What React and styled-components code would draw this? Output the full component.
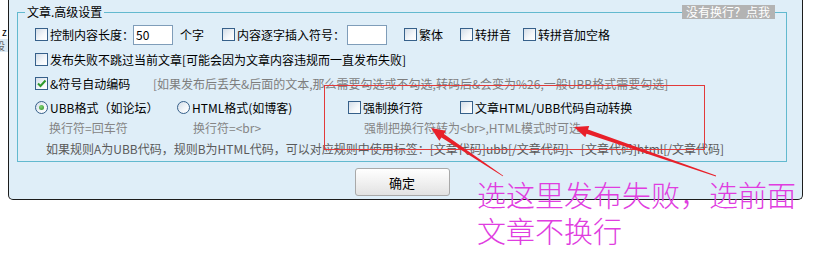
import React from "react";
import styled, { createGlobalStyle } from "styled-components";

const GlobalStyle = createGlobalStyle`
  html, body {
    margin: 0;
    padding: 0;
    background: #fff;
  }
  body {
    font-family: "Noto Sans CJK SC", "Liberation Sans", sans-serif;
    font-size: 12px;
    color: #000;
  }
`;

// arrow with a shaft that narrows toward the tail
const arrowPoints = (tail, tip, tailW = 0.8, neckW = 4.5, headL = 14, headW = 12) => {
  const [x1, y1] = tail;
  const [x2, y2] = tip;
  const len = Math.hypot(x2 - x1, y2 - y1);
  const ux = (x2 - x1) / len;
  const uy = (y2 - y1) / len;
  const nx = -uy;
  const ny = ux;
  const bx = x2 - ux * headL;
  const by = y2 - uy * headL;
  return [
    [x1 + (nx * tailW) / 2, y1 + (ny * tailW) / 2],
    [bx + (nx * neckW) / 2, by + (ny * neckW) / 2],
    [bx + (nx * headW) / 2, by + (ny * headW) / 2],
    [x2, y2],
    [bx - (nx * headW) / 2, by - (ny * headW) / 2],
    [bx - (nx * neckW) / 2, by - (ny * neckW) / 2],
    [x1 - (nx * tailW) / 2, y1 - (ny * tailW) / 2],
  ]
    .map((p) => p.map((v) => v.toFixed(1)).join(","))
    .join(" ");
};

const Page = styled.div`
  position: relative;
  width: 815px;
  height: 258px;
  display: flex;
  align-items: flex-start;
  overflow: hidden;
`;

const BackStrip = styled.div`
  flex: none;
  width: 8px;
  padding-top: 25px;
  overflow: hidden;
  display: flex;
  flex-direction: column;
  gap: 1px;
  font-size: 10px;
  line-height: 13px;
`;

const BackGlyph = styled.span`
  margin-left: ${(p) => p.$ml || 0}px;
  color: ${(p) => p.$color || "#000"};
  background: ${(p) => p.$bg || "transparent"};
  white-space: nowrap;
`;

const Window = styled.div`
  position: relative;
  flex: none;
  width: 795px;
  height: 200px;
  box-sizing: border-box;
  background: #dfeef8;
  border: 1px solid #1c1c1c;
  border-top: none;
  border-radius: 0 0 5px 5px;
  padding: 0 15px 0 8px;
  display: flex;
  flex-direction: column;
`;

const Group = styled.fieldset`
  margin: 4px 0 0;
  padding: 0;
  min-width: 0;
  border: 1px solid #62b9cf;
`;

const Legend = styled.legend`
  margin-left: 7px;
  padding: 0 2px;
  line-height: 16px;
  font-size: 12px;
`;

const HelpBadge = styled.span`
  position: absolute;
  left: 673px;
  top: 5px;
  padding: 0 5px 0 4px;
  background: #b3b3b3;
  color: #fff;
  line-height: 14px;
  font-size: 12px;
`;

const Body = styled.div`
  padding: 2px 0 1px 17px;
  display: flex;
  flex-direction: column;
`;

const Row = styled.div`
  display: flex;
  align-items: center;
  height: ${(p) => p.$h || 24}px;
  white-space: nowrap;
`;

const OptionGrid = styled.div`
  display: grid;
  grid-template-columns: 142px 171px 1fr;
  grid-template-rows: 22px 19px;
  align-items: center;
  white-space: nowrap;
`;

const Option = styled.label`
  flex: none;
  display: inline-flex;
  align-items: center;
  width: ${(p) => (p.$w ? `${p.$w}px` : "auto")};
  margin-left: ${(p) => p.$ml || 0}px;
`;

const Box = styled.span`
  flex: none;
  width: 13px;
  height: 13px;
  box-sizing: border-box;
  margin-right: 2px;
  border: 1px solid #36608a;
  border-radius: ${(p) => (p.$round ? "50%" : "0")};
  background: linear-gradient(135deg, #d3dde8 0%, #f4f7fa 60%, #ffffff 100%);
  display: inline-flex;
  align-items: center;
  justify-content: center;
`;

const Dot = styled.span`
  width: 5px;
  height: 5px;
  border-radius: 50%;
  background: radial-gradient(circle at 40% 35%, #7fd36f, #2f8f2a);
`;

const Text = styled.span`
  flex: none;
  width: ${(p) => (p.$w ? `${p.$w}px` : "auto")};
  margin-left: ${(p) => p.$ml || 0}px;
`;

const Hint = styled.span`
  margin-left: ${(p) => p.$ml || 0}px;
  color: ${(p) => p.$color || "#858585"};
`;

const TextBox = styled.input`
  flex: none;
  width: 40px;
  height: 20px;
  box-sizing: border-box;
  margin: 0;
  padding: 0 2px;
  border: 1px solid #7f9db9;
  background: #fff;
  font-family: inherit;
  font-size: 12px;
  color: #000;
  outline: none;
`;

const Footer = styled.div`
  display: flex;
  justify-content: center;
  padding-top: 6px;
`;

const Button = styled.button`
  width: 95px;
  height: 28px;
  padding: 0;
  border: 1px solid #a9a9a9;
  border-radius: 3px;
  background: linear-gradient(#ffffff, #f1f1f1 50%, #e2e2e2);
  font-family: inherit;
  font-size: 13px;
  color: #000;
`;

const Overlay = styled.svg`
  position: absolute;
  left: 0;
  top: 0;
  pointer-events: none;
`;

const Note = styled.div`
  position: absolute;
  left: 477px;
  top: 177px;
  display: flex;
  flex-direction: column;
  gap: 2px;
  font-size: 29px;
  font-weight: 300;
  line-height: 34px;
  color: #e03de0;
  white-space: nowrap;
`;

const CheckMark = () => (
  <svg width="11" height="11" viewBox="0 0 11 11">
    <path d="M2 5.5 L4.5 8 L9.5 2.5" fill="none" stroke="#2f9a2b" strokeWidth="2" />
  </svg>
);

const Check = ({ checked, round, w, ml, children }) => (
  <Option $w={w} $ml={ml}>
    <Box $round={round}>
      {checked && (round ? <Dot /> : <CheckMark />)}
    </Box>
    {children}
  </Option>
);

export default function App() {
  return (
    <>
      <GlobalStyle />
      <Page>
        <BackStrip>
          <BackGlyph $ml={2}>z</BackGlyph>
          <BackGlyph $ml={-5} $color="#666" $bg="#dbe9f3">
            设
          </BackGlyph>
        </BackStrip>

        <Window>
          <HelpBadge>没有换行？点我</HelpBadge>
          <Group>
            <Legend>文章.高级设置</Legend>
            <Body>
              <Row $h={25}>
                <Check w={98}>控制内容长度：</Check>
                <TextBox defaultValue="50" />
                <Text $ml={7} $w={24}>
                  个字
                </Text>
                <Check ml={18} w={125}>
                  内容逐字插入符号：
                </Check>
                <TextBox defaultValue="" />
                <Check ml={17} w={56}>
                  繁体
                </Check>
                <Check w={63}>转拼音</Check>
                <Check>转拼音加空格</Check>
              </Row>
              <Row $h={24}>
                <Check>发布失败不跳过当前文章[可能会因为文章内容违规而一直发布失败]</Check>
              </Row>
              <Row $h={25}>
                <Check checked w={118}>
                  &amp;符号自动编码
                </Check>
                <Hint $color="#7d7d7d">
                  [如果发布后丢失&amp;后面的文本,那么需要勾选或不勾选,转码后&amp;会变为%26,一般UBB格式需要勾选]
                </Hint>
              </Row>
              <OptionGrid>
                <Check round checked>
                  UBB格式（如论坛）
                </Check>
                <Check round>HTML格式(如博客)</Check>
                <Row $h={22}>
                  <Check w={112}>强制换行符</Check>
                  <Check>文章HTML/UBB代码自动转换</Check>
                </Row>
                <Hint $ml={14}>换行符=回车符</Hint>
                <Hint $ml={16}>换行符=&lt;br&gt;</Hint>
                <Hint $ml={16}>强制把换行符转为&lt;br&gt;,HTML模式时可选</Hint>
              </OptionGrid>
              <Row $h={23}>
                <Hint $ml={11} $color="#5a5a5a">
                  如果规则A为UBB代码，规则B为HTML代码，可以对应规则中使用标签：[文章代码]ubb[/文章代码]、[文章代码]html[/文章代码]
                </Hint>
              </Row>
            </Body>
          </Group>
          <Footer>
            <Button>确定</Button>
          </Footer>
        </Window>

        <Overlay width="815" height="258">
          <rect x="324.5" y="85.5" width="380" height="64" fill="none" stroke="#e23a3a" strokeWidth="1" />
          <polygon points={arrowPoints([503, 176], [431, 128])} fill="#e8202a" />
          <polygon points={arrowPoints([716, 176], [574, 127])} fill="#e8202a" />
        </Overlay>

        <Note>
          <span>选这里发布失败，选前面</span>
          <span>文章不换行</span>
        </Note>
      </Page>
    </>
  );
}
